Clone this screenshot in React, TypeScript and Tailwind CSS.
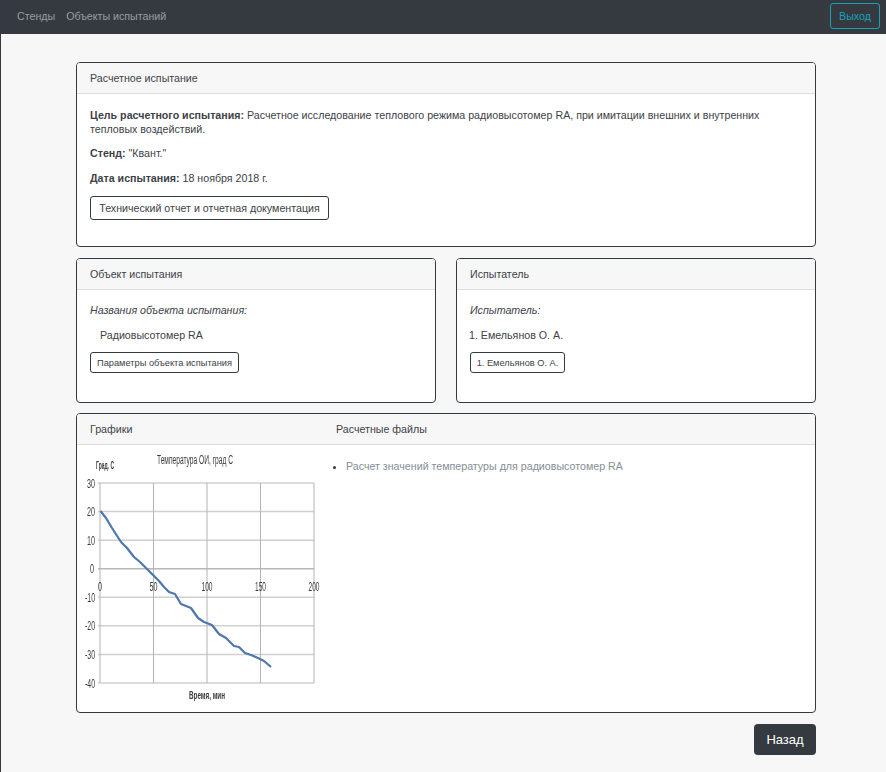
const line = "M100.5 511 L106 518 L112 528 L121 542 L127 548 L134 557 L140 562 L148 570 L153 575 L159 581 L164 587 L169 592 L175 594 L181 604 L186 606 L191 608 L198 618 L204 622 L212 625 L219 634 L226 638 L234 646 L239 647 L245 653 L251 655 L258 658 L264 661 L271 667";

function Chart() {
  const yTicks = [30, 20, 10, 0, -10, -20, -30, -40];
  const xTicks = [0, 50, 100, 150, 200];
  const y = (v: number) => 483 + (30 - v) * (200 / 70);
  const x = (v: number) => 100 + v * 1.07;
  return (
    <svg width="243" height="256" viewBox="83 450 243 256" className="block blur-[0.35px]">
      <g>
        {yTicks.map((t) => (
          <line key={t} x1="98" x2="314" y1={y(t)} y2={y(t)} stroke={t === 0 ? "#b8b8b8" : "#d0d0d0"} strokeWidth="1.5" />
        ))}
        {xTicks.map((t) => (
          <line key={t} x1={x(t)} x2={x(t)} y1="483" y2="683" stroke="#b4b4b4" strokeWidth="1" />
        ))}
      </g>
      <g fontFamily="Liberation Sans, sans-serif" fill="#3a3a3a">
        <text x="96" y="469" fontSize="10" fontWeight="700" textLength="18" lengthAdjust="spacingAndGlyphs">Град. С</text>
        <text x="157" y="464" fontSize="12.5" textLength="76" lengthAdjust="spacingAndGlyphs">Температура ОИ, град С</text>
        {yTicks.map((t) => (
          <text key={t} x={t < 0 ? 85 : t === 0 ? 90 : 87} y={y(t) + 4.5} fontSize="12" textLength={t < 0 ? 10 : t === 0 ? 4 : 8} lengthAdjust="spacingAndGlyphs">{t}</text>
        ))}
        {xTicks.map((t) => (
          <text key={t} x={x(t) - (t === 0 ? 2 : t === 50 ? 4 : 5.5)} y="591" fontSize="12" textLength={t === 0 ? 4 : t === 50 ? 8 : 11} lengthAdjust="spacingAndGlyphs">{t}</text>
        ))}
        <text x="189" y="699" fontSize="11" fontWeight="700" textLength="36" lengthAdjust="spacingAndGlyphs">Время, мин</text>
      </g>
      <path d={line} fill="none" stroke="#4f76ad" strokeWidth="2.2" strokeLinejoin="round" />
    </svg>
  );
}

function Card({ title, children, className = "" }: { title: string; children: React.ReactNode; className?: string }) {
  return (
    <section className={`rounded-[4px] border border-[#343a40] bg-white ${className}`}>
      <div className="flex h-[31px] items-center rounded-t-[3px] border-b border-[#dcdcdc] bg-[#f7f7f7] px-[13px]">{title}</div>
      {children}
    </section>
  );
}

export default function App() {
  return (
    <div className="h-[772px] overflow-hidden border-l border-[#3a3540] bg-[#f7f7f8] font-['Liberation_Sans',sans-serif] text-[10.67px] leading-[14px] text-[#3d4247]">
      <nav className="-ml-px flex h-[34px] items-center justify-between bg-[#343a40] pb-[2px] pl-[17px] pr-[6px]">
        <div className="flex gap-[11px] text-[#9a9da0]">
          <span>Стенды</span>
          <span>Объекты испытаний</span>
        </div>
        <button className="h-[26px] w-[50px] rounded-[3px] border border-[#17a2b8] text-[#17a2b8]">Выход</button>
      </nav>
      <main className="ml-[75px] flex w-[740px] flex-col pt-[28px]">
        <Card title="Расчетное испытание" className="h-[185px]">
          <div className="px-[13px] pt-[14px]">
            <p><b>Цель расчетного испытания:</b> Расчетное исследование теплового режима радиовысотомер RA, при имитации внешних и внутренних тепловых воздействий.</p>
            <p className="mt-[10px]"><b>Стенд:</b> "Квант."</p>
            <p className="mt-[11px]"><b>Дата испытания:</b> 18 ноября 2018 г.</p>
            <button className="mt-[11px] h-[24px] w-[239px] rounded-[3px] border border-[#343a40] bg-white">Технический отчет и отчетная документация</button>
          </div>
        </Card>
        <div className="mt-[11px] flex justify-between">
          <Card title="Объект испытания" className="h-[145px] w-[360px]">
            <div className="px-[13px] pt-[13px]">
              <p><i>Названия объекта испытания:</i></p>
              <p className="mt-[11px] pl-[10px]">Радиовысотомер RA</p>
              <button className="mt-[10px] h-[21px] w-[149px] rounded-[3px] border border-[#343a40] bg-white text-[9.25px]">Параметры объекта испытания</button>
            </div>
          </Card>
          <Card title="Испытатель" className="h-[145px] w-[360px]">
            <div className="px-[13px] pt-[13px]">
              <p><i>Испытатель:</i></p>
              <p className="-ml-px mt-[11px]">1. Емельянов О. А.</p>
              <button className="mt-[10px] h-[21px] w-[95px] rounded-[3px] border border-[#343a40] bg-white text-[9.25px]">1. Емельянов О. А.</button>
            </div>
          </Card>
        </div>
        <section className="mt-[10px] h-[300px] rounded-[4px] border border-[#343a40] bg-white">
          <div className="flex h-[31px] items-center rounded-t-[3px] border-b border-[#dcdcdc] bg-[#f7f7f7]">
            <div className="w-[259px] pl-[13px]">Графики</div>
            <div>Расчетные файлы</div>
          </div>
          <div className="flex">
            <div className="w-[246px] shrink-0 pl-[6px] pt-[5px]"><Chart /></div>
            <ul className="list-disc pl-[23px] pt-[14px] text-[#868e96] marker:text-[#343a40]">
              <li>Расчет значений температуры для радиовысотомер RA</li>
            </ul>
          </div>
        </section>
        <div className="mt-[11px] flex justify-end">
          <button className="h-[31px] w-[62px] rounded-[4px] bg-[#343a40] text-[13px] text-white">Назад</button>
        </div>
      </main>
    </div>
  );
}
